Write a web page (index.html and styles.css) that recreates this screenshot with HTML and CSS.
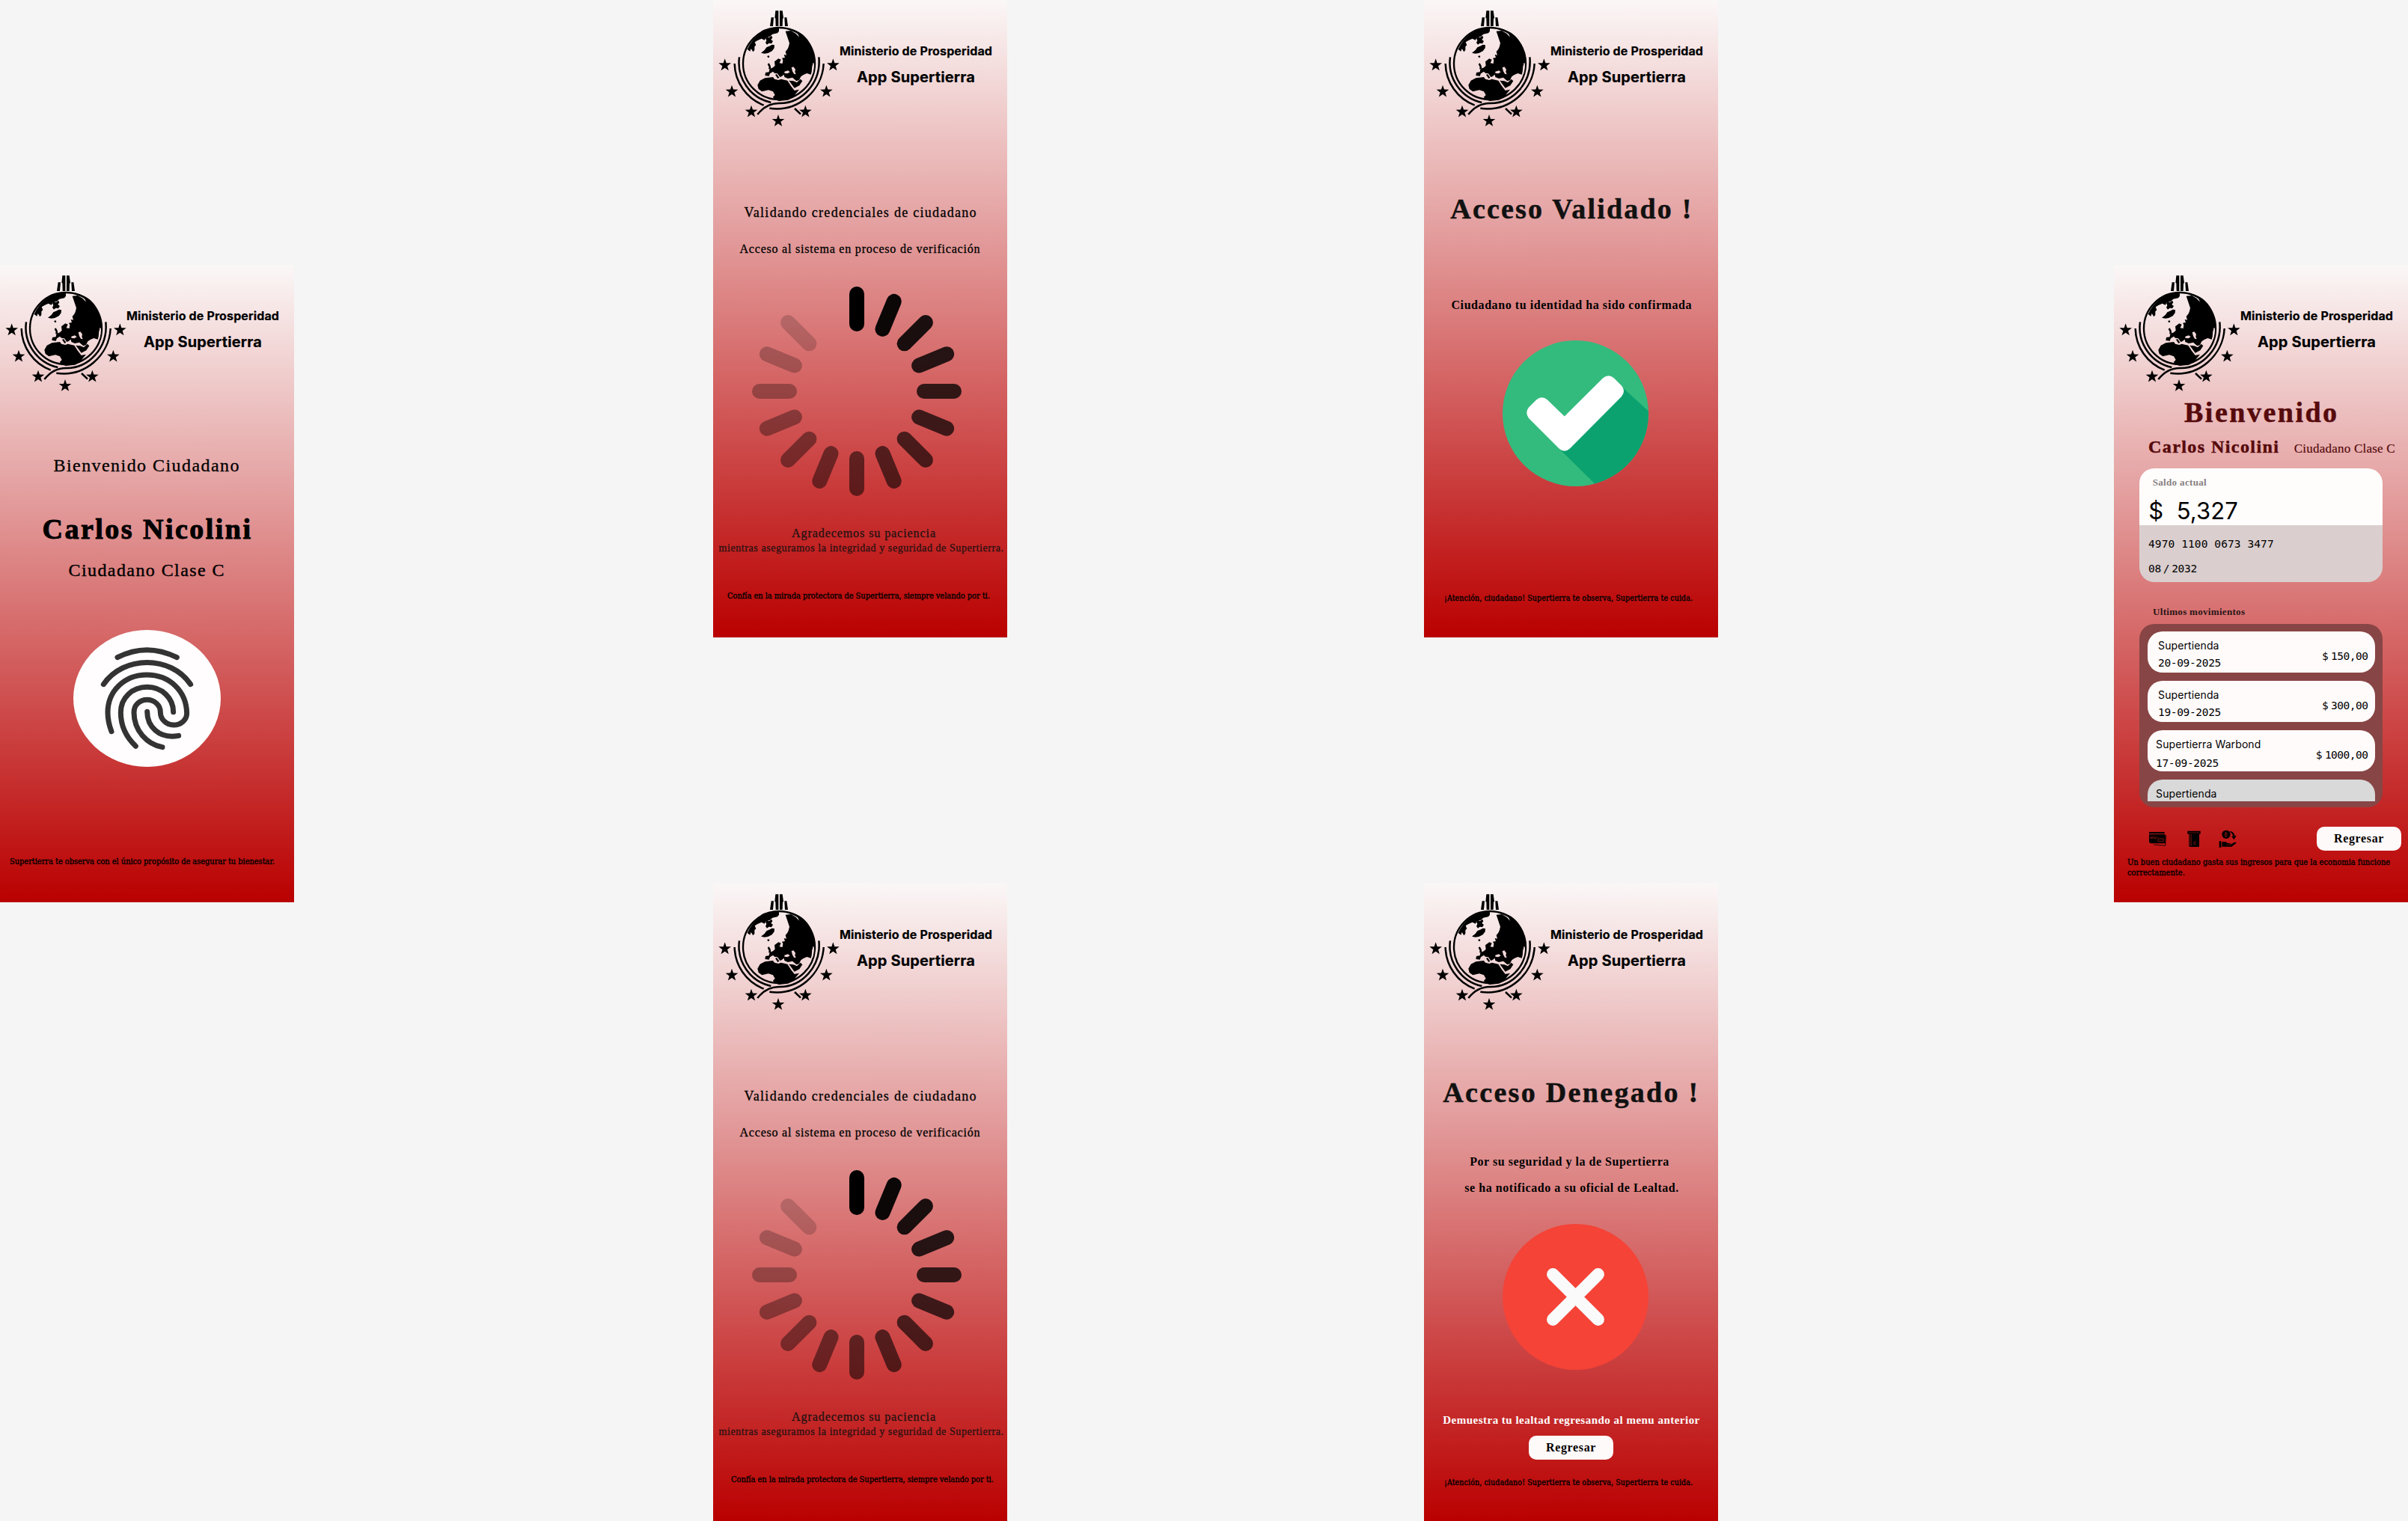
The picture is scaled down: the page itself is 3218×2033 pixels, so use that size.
FILE: index.html
```html
<!DOCTYPE html>
<html lang="es">
<head>
<meta charset="utf-8">
<title>App Supertierra</title>
<link rel="stylesheet" href="styles.css">
</head>
<body>
<svg class="defs" aria-hidden="true">
  <symbol id="star" viewBox="-26 -26 52 52"><path d="M0-26 6-8.3 25-8 10 3.4 15.5 21.5 0 11-15.5 21.5-10 3.4-25-8-6-8.3Z"/></symbol>
  <symbol id="logo" viewBox="0 -3 507 525">
    <path d="M250 40h12v62h-11l-1-32h-3zM267 40h11l4 30-3 1-1 31h-11zM233 67h10l-3 35h-12zM286 67h9l5 35h-12z"/>
    <circle cx="264" cy="252" r="144" fill="none" stroke="#000" stroke-width="7"/>
    <path d="M137 195Q172 115 264 107L264 122 258 130 238 134 228 143 212 148 206 158 194 152 180 158 167 166 172 178 166 184 166 198 160 205 152 192 148 203Z"/>
    <path d="M210 150l6-6 8 4 10-8 4 8-6 8 8 6-6 10-10-2-8 6-6-8 4-8zM192 209L206 198 214 187 228 181 236 176 246 178 245 190 236 202 220 210 206 212ZM216 222l8-2 2 6-5 3z"/>
    <path d="M290 122L312 120 332 132 345 146 338 130 310 113C375 125 410 190 410 252L405 250 397 262 395 285 392 296 376 291 362 297 352 304 345 318 334 322 318 308 300 312 286 306 284 296 274 304 268 306 258 292 246 290 240 284 228 292 224 302 208 300 210 288 224 286 226 274 240 268 248 260 246 244 254 238 262 232 272 236 266 250 278 252 280 238 276 230 288 228 284 216 294 218 290 204 298 194 302 186 306 170 300 152Z"/>
    <path d="M218 254l6-4 6 10 2 12-10 2 2-8zM249 297l6-3 10 14-6 4zM178 338L188 320 208 310 240 306 246 314 262 318 272 314 298 320 312 342 326 360 345 356 330 374 322 388 300 398 264 402 244 395 240 386 248 378 240 364 222 358 196 364 182 354ZM304 320L322 322 336 328 350 314 358 322 346 340 326 350Z"/>
    <path fill="#f2d8d9" d="M314 268l8-3 8 10-2 10 4 10-8-2-6-10zM286 284l14-4 8 6-10 6-12-2z"/>
    <path d="M401 250c3 15 0 30-4 44" fill="none" stroke="#f3dcdc" stroke-width="4"/>
    <g fill="none" stroke="#000" stroke-width="7.500">
      <path d="M86 252A182 182 0 0 0 203 419M105 226A164 164 0 0 0 232 408"/>
      <path d="M424 226C434 330 355 413 264 411C230 411 200 428 178 456M443 252C438 360 340 448 226 431M327 432 351 455"/>
    </g>
    <use href="#star" x="21" y="232" width="52" height="52"/><use href="#star" x="49" y="338" width="52" height="52"/><use href="#star" x="127" y="419" width="52" height="52"/><use href="#star" x="235" y="456" width="52" height="52"/><use href="#star" x="344" y="419" width="52" height="52"/><use href="#star" x="428" y="338" width="52" height="52"/><use href="#star" x="455" y="232" width="52" height="52"/>
  </symbol>
  <symbol id="spinner" viewBox="-140 -140 280 280">
    <g stroke="#000" stroke-width="20" stroke-linecap="round">
      <path d="M0-130V-90"/>
      <path d="M0-130V-90" transform="rotate(22.5)" opacity=".94"/>
      <path d="M0-130V-90" transform="rotate(45)" opacity=".88"/>
      <path d="M0-130V-90" transform="rotate(67.5)" opacity=".82"/>
      <path d="M0-130V-90" transform="rotate(90)" opacity=".76"/>
      <path d="M0-130V-90" transform="rotate(112.5)" opacity=".7"/>
      <path d="M0-130V-90" transform="rotate(135)" opacity=".64"/>
      <path d="M0-130V-90" transform="rotate(157.5)" opacity=".59"/>
      <path d="M0-130V-90" transform="rotate(180)" opacity=".53"/>
      <path d="M0-130V-90" transform="rotate(202.5)" opacity=".47"/>
      <path d="M0-130V-90" transform="rotate(225)" opacity=".41"/>
      <path d="M0-130V-90" transform="rotate(247.5)" opacity=".35"/>
      <path d="M0-130V-90" transform="rotate(270)" opacity=".29"/>
      <path d="M0-130V-90" transform="rotate(292.5)" opacity=".23"/>
      <path d="M0-130V-90" transform="rotate(315)" opacity=".17"/>
    </g>
  </symbol>
</svg>

<main class="board">
  <section class="screen screen-login">
    <header class="head"><svg class="logo"><use href="#logo"/></svg><div class="brand"><p class="ministry">Ministerio de Prosperidad</p><p class="app">App Supertierra</p></div></header>
    <p class="t login-hello">Bienvenido Ciudadano</p>
    <p class="t login-name">Carlos Nicolini</p>
    <p class="t login-class">Ciudadano Clase C</p>
    <svg class="fingerprint" viewBox="294 186 591 549">
      <ellipse cx="589.5" cy="460.5" rx="295.5" ry="274.5" fill="#fffdfd"/>
      <g fill="none" stroke="#333" stroke-width="21" stroke-linecap="round">
        <path d="M471 296Q588 236 709 296M415 404C495 287 685 287 764 404"/>
        <path d="M447 593C438 570 432 545 432 517C432 430 500 366 588 366C680 366 747 430 749 520C749 547 725 567 696 567C667 567 643 545 643 515C643 487 618 466 590 466C560 466 537 487 537 517C537 590 590 645 651 656"/>
        <path d="M544 652C505 615 484 570 484 517C484 458 530 415 590 415C650 415 695 460 695 515M590 514C590 570 635 625 716 610"/>
      </g>
    </svg>
    <p class="t foot login-foot">Supertierra te observa con el único propósito de asegurar tu bienestar.</p>
  </section>

  <section class="screen screen-check-a">
    <header class="head"><svg class="logo"><use href="#logo"/></svg><div class="brand"><p class="ministry">Ministerio de Prosperidad</p><p class="app">App Supertierra</p></div></header>
    <p class="t check-title">Validando credenciales de ciudadano</p>
    <p class="t check-sub">Acceso al sistema en proceso de verificación</p>
    <svg class="spinner"><use href="#spinner"/></svg>
    <p class="t thanks">Agradecemos su paciencia</p>
    <p class="t thanks-more">mientras aseguramos la integridad y seguridad de Supertierra.</p>
    <p class="t foot check-foot">Confía en la mirada protectora de Supertierra, siempre velando por ti.</p>
  </section>

  <section class="screen screen-check-b">
    <header class="head"><svg class="logo"><use href="#logo"/></svg><div class="brand"><p class="ministry">Ministerio de Prosperidad</p><p class="app">App Supertierra</p></div></header>
    <p class="t check-title">Validando credenciales de ciudadano</p>
    <p class="t check-sub">Acceso al sistema en proceso de verificación</p>
    <svg class="spinner"><use href="#spinner"/></svg>
    <p class="t thanks">Agradecemos su paciencia</p>
    <p class="t thanks-more">mientras aseguramos la integridad y seguridad de Supertierra.</p>
    <p class="t foot check-foot check-foot-b">Confía en la mirada protectora de Supertierra, siempre velando por ti.</p>
  </section>

  <section class="screen screen-ok">
    <header class="head"><svg class="logo"><use href="#logo"/></svg><div class="brand"><p class="ministry">Ministerio de Prosperidad</p><p class="app">App Supertierra</p></div></header>
    <p class="t ok-title">Acceso Validado !</p>
    <p class="t ok-sub">Ciudadano tu identidad ha sido confirmada</p>
    <svg class="badge badge-ok" viewBox="0 0 195 195">
      <clipPath id="disc"><circle cx="97.5" cy="97.5" r="97.5"/></clipPath>
      <circle cx="97.5" cy="97.5" r="97.5" fill="#33bb7e"/>
      <path clip-path="url(#disc)" fill="#0ba26f" d="M161 63.5 226 123V220H152L78 147Z"/>
      <path fill="#fff" d="M35 89.500 45 79.500Q52.500 73 60 79.500L82.700 101.500 134 50.500Q141.700 44 149 50.500L159 60.500Q165 67.500 159 75L90 144.500Q82.700 151 75.500 144.500L35 104Q29.500 96.500 35 89.500Z"/>
    </svg>
    <p class="t foot notice ok-foot">¡Atención, ciudadano! Supertierra te observa, Supertierra te cuida.</p>
  </section>

  <section class="screen screen-denied">
    <header class="head"><svg class="logo"><use href="#logo"/></svg><div class="brand"><p class="ministry">Ministerio de Prosperidad</p><p class="app">App Supertierra</p></div></header>
    <p class="t denied-title">Acceso Denegado !</p>
    <p class="t denied-one">Por su seguridad y la de Supertierra</p>
    <p class="t denied-two">se ha notificado a su oficial de Lealtad.</p>
    <svg class="badge badge-no" viewBox="0 0 195 195">
      <circle cx="97.500" cy="97.500" r="97.500" fill="#f54337"/>
      <path d="M67.300 67.300 127.700 127.700M127.700 67.300 67.300 127.700" stroke="#fafafa" stroke-width="16.500" stroke-linecap="round"/>
    </svg>
    <p class="t denied-hint">Demuestra tu lealtad regresando al menu anterior</p>
    <button class="back">Regresar</button>
    <p class="t foot notice denied-foot">¡Atención, ciudadano! Supertierra te observa, Supertierra te cuida.</p>
  </section>

  <section class="screen screen-home">
    <header class="head"><svg class="logo"><use href="#logo"/></svg><div class="brand"><p class="ministry">Ministerio de Prosperidad</p><p class="app">App Supertierra</p></div></header>
    <p class="t home-title">Bienvenido</p>
    <div class="who"><p class="t who-name">Carlos Nicolini</p><p class="t who-class">Ciudadano Clase C</p></div>
    <div class="card">
      <div class="card-top"><p class="t card-label">Saldo actual</p><p class="t card-amount"><span>$</span><span>5,327</span></p></div>
      <div class="card-bottom"><p class="t card-number">4970 1100 0673 3477</p><p class="t card-date">08 / 2032</p></div>
    </div>
    <p class="t moves-label">Ultimos movimientos</p>
    <div class="moves">
      <div class="move"><div><p class="t move-name">Supertienda</p><p class="t move-date">20-09-2025</p></div><p class="t move-amount">$ 150,00</p></div>
      <div class="move"><div><p class="t move-name">Supertienda</p><p class="t move-date">19-09-2025</p></div><p class="t move-amount">$ 300,00</p></div>
      <div class="move move-wide"><div><p class="t move-name">Supertierra Warbond</p><p class="t move-date">17-09-2025</p></div><p class="t move-amount">$ 1000,00</p></div>
      <div class="move move-cut"><div><p class="t move-name">Supertienda</p></div></div>
    </div>
    <div class="tools">
      <svg class="tool" viewBox="0 0 72 72">
        <path d="M3 9H65V16H3ZM3 19H66L68 22V55H10L3 50Z"/>
        <path d="M69 20 71 22 68 64 22 60" fill="none" stroke="#000" stroke-width="2.500"/>
        <path d="M7 30H28M32 30H38M7 34H18M22 34H34M39 36H60V47H39Z" fill="none" stroke="#c01c1d" stroke-width="2"/>
      </svg>
      <svg class="tool tool-atm" viewBox="0 0 72 72">
        <path d="M10 5H62V17H57V67L54 69H20L16 66V17H10Z"/>
        <path d="M14 12H58M20 18V64M25 18V66M36 47V61M41 44V61" fill="none" stroke="#c01c1d" stroke-width="1.500"/>
      </svg>
      <svg class="tool tool-hand" viewBox="0 0 72 72">
        <circle cx="30" cy="19" r="17"/>
        <path d="M47 5Q62 9 64 24L71 23 62 40 51 27 57 26Q56 14 45 8ZM2 46H10V71H2ZM13 49H29L36 54H47Q49 59 42 59H31V61H45L62 51Q72 49 70 54L52 68H13Z"/>
        <path d="M26 12H31Q36 15 31 19 37 23 31 27H26ZM26 19H31M29 9V12M29 27V30" fill="none" stroke="#c01c1d" stroke-width="2"/>
      </svg>
      <button class="back">Regresar</button>
    </div>
    <p class="t foot home-foot">Un buen ciudadano gasta sus ingresos para que la economia funcione<br>correctamente.</p>
  </section>
</main>
</body>
</html>
```
FILE: styles.css
```css
* { box-sizing: border-box; margin: 0; padding: 0; }
body { background: #f5f5f5; color: #000; font-family: "Liberation Serif", serif; }
.defs { display: none; }
svg { display: block; flex: none; }

.board {
  display: grid;
  grid-template: 852px 852px / 953px 950px 922px 393px;
  row-gap: 329px;
  width: 3218px;
  height: 2033px;
  overflow: hidden;
}
.screen {
  display: flex;
  flex-direction: column;
  align-items: flex-start;
  width: 393px;
  height: 852px;
  overflow: hidden;
  background: linear-gradient(#fbf7f7, #ba0000);
}
.screen-login { grid-area: 1 / 1 / 3 / 2; margin-top: 354px; }
.screen-check-a { grid-area: 1 / 2; }
.screen-check-b { grid-area: 2 / 2; }
.screen-ok { grid-area: 1 / 3; }
.screen-denied { grid-area: 2 / 3; }
.screen-home { grid-area: 1 / 4 / 3 / 5; margin-top: 354px; }

.t { white-space: nowrap; flex: none; }

/* Header */
.head { display: flex; width: 393px; height: 175px; flex: none; }
.logo { width: 169px; height: 175px; }
.brand { width: 204px; padding-top: 58.2px; display: flex; flex-direction: column; align-items: center; gap: 12.5px; font-family: Inter, sans-serif; font-weight: 700; white-space: nowrap; -webkit-text-stroke: .2px #000; }
.ministry { font-size: 16px; line-height: 20px; letter-spacing: .124px; }
.app { font-size: 20px; line-height: 24px; letter-spacing: .148px; }

.foot { font-family: "DejaVu Serif Condensed", "DejaVu Serif", serif; font-size: 11px; line-height: 14px; letter-spacing: -.05px; -webkit-text-stroke: .35px #000; }
.notice { font-size: 10.5px; letter-spacing: .132px; }
.back { flex: none; width: 113px; height: 32px; border: 0; border-radius: 10px; background: #fffafa; color: #000; font: 700 16px/30px "Liberation Serif", serif; letter-spacing: .656px; text-align: center; }

/* Login */
.login-hello { margin: 78px 0 0 71.5px; font-size: 24px; line-height: 30px; letter-spacing: 1.44px; -webkit-text-stroke: .3px #000; }
.login-name { margin: 47.7px 0 0 56.5px; font-size: 38px; font-weight: 700; line-height: 44px; letter-spacing: 2.477px; -webkit-text-stroke: 1px #000; }
.login-class { margin: 18.2px 0 0 91.5px; font-size: 24px; line-height: 30px; letter-spacing: 1.418px; -webkit-text-stroke: .4px #000; }
.fingerprint { margin: 65px 0 0 98px; width: 197px; height: 183px; }
.login-foot { margin: 120px 0 0 13px; }

/* Credential check */
.check-title { margin: 97px 0 0 41.5px; font-size: 18px; line-height: 24px; letter-spacing: 1.283px; -webkit-text-stroke: .3px #000; }
.check-sub { margin: 27px 0 0 35.5px; font-size: 16px; line-height: 20px; letter-spacing: .791px; -webkit-text-stroke: .3px #000; }
.spinner { margin: 40px 0 0 52px; width: 280px; height: 280px; }
.thanks { margin: 40px 0 0 105px; font-size: 16px; line-height: 20px; letter-spacing: .931px; color: #221112; -webkit-text-stroke: .3px #221112; }
.thanks-more { margin: 1.6px 0 0 7.5px; font-size: 14px; line-height: 16px; letter-spacing: .575px; color: #2a1112; -webkit-text-stroke: .3px #2a1112; }
.check-foot { margin: 49.5px 0 0 19px; }
.check-foot-b { margin-left: 24px; }

/* Access results */
.ok-title, .denied-title { color: #111; font-size: 38px; font-weight: 700; line-height: 44px; -webkit-text-stroke: .5px #111; }
.ok-title { margin: 82px 0 0 35.3px; letter-spacing: 2.179px; }
.denied-title { margin: 81.5px 0 0 25.3px; letter-spacing: 2.316px; }
.ok-sub, .denied-one, .denied-two { font-size: 16px; font-weight: 700; line-height: 20px; }
.ok-sub { margin: 97.4px 0 0 36.5px; letter-spacing: .567px; }
.denied-one { margin: 61.1px 0 0 61.3px; letter-spacing: .523px; }
.denied-two { margin: 15px 0 0 54.3px; letter-spacing: .55px; }
.badge { width: 195px; height: 195px; margin-left: 105.3px; }
.badge-ok { margin-top: 36.4px; }
.badge-no { margin-top: 38.4px; }
.ok-foot { margin: 142.6px 0 0 27px; }
.denied-hint { margin: 56.9px 0 0 25.3px; font-size: 15px; font-weight: 700; line-height: 20px; letter-spacing: .484px; color: #fff; }
.screen-denied .back { margin: 11.1px 0 0 140px; }
.denied-foot { margin: 22.6px 0 0 27px; }

/* Home */
.home-title { margin: 1.5px 0 0 94px; font-size: 38px; font-weight: 700; line-height: 40px; letter-spacing: 2.5px; color: #560a0c; -webkit-text-stroke: .5px #560a0c; }
.who { display: flex; align-items: baseline; margin: 12.4px 0 0 46px; color: #560a0c; height: 28px; flex: none; }
.who-name { width: 194.7px; font-size: 24px; font-weight: 700; line-height: 28px; letter-spacing: 1.429px; -webkit-text-stroke: .5px #560a0c; }
.who-class { font-size: 17px; line-height: 20px; letter-spacing: .233px; -webkit-text-stroke: .2px #560a0c; }
.card { display: flex; flex-direction: column; margin: 15.1px 0 0 34px; width: 325px; height: 152px; border-radius: 20px; overflow: hidden; flex: none; }
.card-top { height: 76px; padding: 10.9px 0 0 12.2px; background: #fffcfc; }
.card-label { padding-left: 5.5px; font-size: 13px; font-weight: 700; line-height: 16px; letter-spacing: .339px; color: #847f7f; }
.card-amount { display: flex; margin-top: 14.1px; font: 400 31px/32px Inter, sans-serif; letter-spacing: .1px; }
.card-amount span:first-child { width: 37.5px; }
.card-bottom { height: 76px; padding: 16.3px 0 0 12px; background: #dacece; }
.card-number, .card-date, .move-date, .move-amount { font-family: "DejaVu Sans Mono", monospace; font-size: 14.5px; line-height: 18px; }
.card-number { letter-spacing: .1px; }
.card-date { margin-top: 14.7px; letter-spacing: -.3px; word-spacing: -5.5px; }
.moves-label { margin: 31.9px 0 0 52px; font-size: 13px; font-weight: 700; line-height: 16px; letter-spacing: .313px; color: #2a1516; }
.moves { display: flex; flex-direction: column; gap: 11px; margin: 8.1px 0 0 34px; width: 325px; height: 245.3px; padding: 10px 10px 0 11px; border-radius: 20px; background: #884545; flex: none; }
.move { display: flex; justify-content: space-between; height: 55px; padding: 10.2px 9.5px 0 14.1px; border-radius: 20px; background: #fffbfb; flex: none; }
.move-name { font: 400 14px/18px Inter, sans-serif; letter-spacing: .1px; }
.move-date { margin-top: 5px; letter-spacing: -.35px; }
.move-amount { margin-top: 13.5px; letter-spacing: -.5px; word-spacing: -4.3px; }
.move-wide { padding-left: 11.1px; }
.move-wide .move-date { margin-top: 7px; }
.move-cut { height: 29px; padding-left: 11.1px; border-radius: 20px 20px 0 0; background: #d9d9d9; }
.tools { display: flex; align-items: center; margin: 25.7px 0 0 46px; width: 338px; height: 32px; flex: none; }
.tool { width: 24px; height: 24px; }
.tool-atm { margin-left: 24.5px; }
.tool-hand { margin-left: 21px; }
.tools .back { margin-left: auto; }
.home-foot { margin: 9.4px 0 0 18px; letter-spacing: 0; }
```
